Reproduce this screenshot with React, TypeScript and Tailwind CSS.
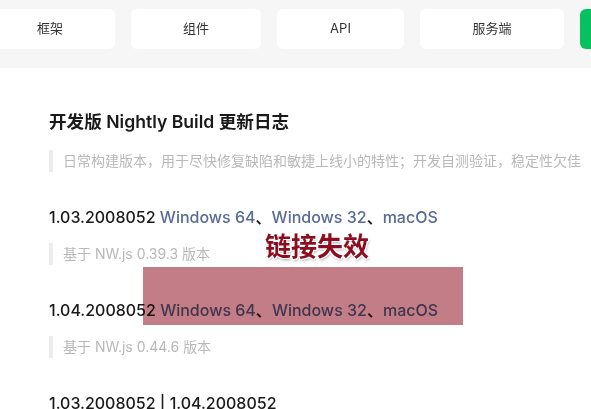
import React from "react";

const tabs = [
  { label: "框架", w: "w-[130px]" },
  { label: "组件", w: "w-[130px]" },
  { label: "API", w: "w-[127px]" },
  { label: "服务端", w: "w-[144px]" },
];

const builds = [
  { version: "1.03.2008052", nw: "0.39.3" },
  { version: "1.04.2008052", nw: "0.44.6" },
];

function Quote({ children }: { children: React.ReactNode }) {
  return (
    <div className="border-l-4 border-[#ececec] pl-[10px] text-[14px] leading-[22px] text-[#b8b8b8] whitespace-nowrap">
      {children}
    </div>
  );
}

export default function App() {
  return (
    <div
      className="relative w-[591px] h-[409px] overflow-hidden bg-white"
      style={{ fontFamily: 'Inter, "Noto Sans CJK SC", sans-serif' }}
    >
      {/* Tab bar */}
      <div className="bg-[#f6f6f6] pt-[9px] pb-[19px]">
        <div className="flex gap-4 ml-[-15px]">
          {tabs.map((t) => (
            <div
              key={t.label}
              className={`${t.w} shrink-0 h-10 rounded-md bg-white flex items-center justify-center text-[13px] text-[#333]`}
            >
              {t.label}
            </div>
          ))}
          <div className="w-[130px] shrink-0 h-10 rounded-md bg-[#07c160]" />
        </div>
      </div>

      {/* Content */}
      <div className="pl-[49px] pt-[42px]">
        <h1 className="text-[17.6px] leading-6 font-semibold text-[#1a1a1a]">
          开发版 Nightly Build 更新日志
        </h1>
        <div className="mt-4">
          <Quote>日常构建版本，用于尽快修复缺陷和敏捷上线小的特性；开发自测验证，稳定性欠佳</Quote>
        </div>

        {builds.map((b) => (
          <div key={b.version} className="mt-[33px]">
            <div className="text-[16px] leading-6 font-medium text-[#1a1a1a] whitespace-nowrap">
              {b.version}{" "}
              <span className="text-[#576b95]">Windows 64</span>、
              <span className="text-[#576b95]">Windows 32</span>、
              <span className="text-[#576b95]">macOS</span>
            </div>
            <div className="mt-[14px]">
              <Quote>基于 NW.js {b.nw} 版本</Quote>
            </div>
          </div>
        ))}

        <div className="mt-[33px] text-[16px] leading-6 font-medium text-[#1a1a1a] whitespace-nowrap">
          1.03.2008052 | 1.04.2008052
        </div>
      </div>

      {/* Annotation overlay */}
      <div className="absolute left-[143px] top-[267px] w-[320px] h-[58px] bg-[#c27d86] mix-blend-multiply" />
      <div
        className="absolute left-[265px] top-[234px] text-[26px] leading-none font-bold text-[#8b0d1f]"
        style={{
          textShadow:
            "0 0 2px #fff, 1px 1px 0 #fff, -1px -1px 0 #fff, 1px -1px 0 #fff, -1px 1px 0 #fff, 1px 2px 3px rgba(0,0,0,0.35)",
        }}
      >
        链接失效
      </div>
    </div>
  );
}
